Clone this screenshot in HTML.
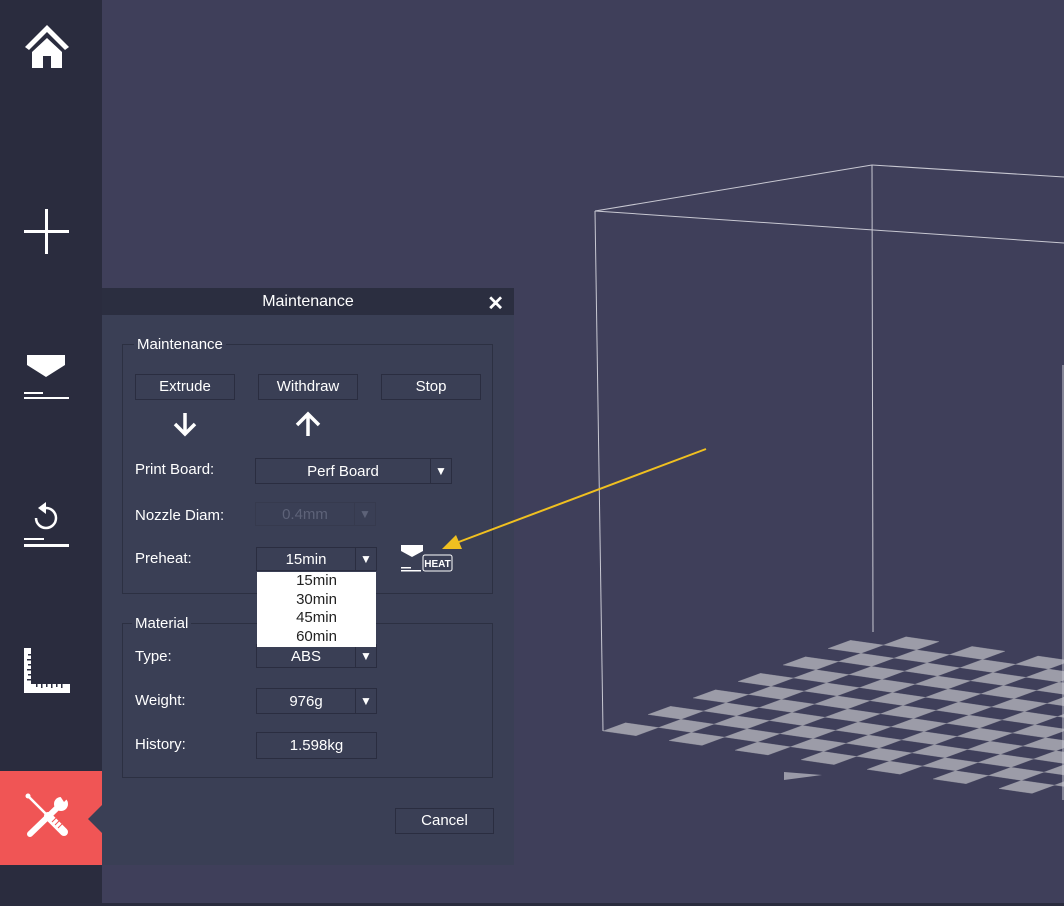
<!DOCTYPE html>
<html><head><meta charset="utf-8"><style>
*{margin:0;padding:0;box-sizing:border-box}
body{width:1064px;height:906px;background:#3f3f5a;position:relative;overflow:hidden;font-family:"Liberation Sans",Arial,sans-serif;color:#fff}
.side{position:absolute;left:0;top:0;width:102px;height:906px;background:#2a2c3e}
.red{position:absolute;left:0;top:771px;width:102px;height:94px;background:#f05555}
.notch{position:absolute;left:88px;top:805px;width:0;height:0;border-top:14px solid transparent;border-bottom:14px solid transparent;border-right:14px solid #3a3f55}
.dlg{position:absolute;left:102px;top:288px;width:412px;height:577px;background:#3a3f55}
.tb{height:27px;background:#2b2e40;text-align:center;font-size:16px;line-height:27px}
.x{position:absolute;right:10px;top:3px;font-size:20px;font-weight:bold}
.fs{position:absolute;border:1px solid #2c3042}
.leg{position:absolute;background:#3a3f55;font-size:15px;padding:0 3px}
.lab{position:absolute;font-size:15px}
.btn{position:absolute;border:1px solid #2a2d40;font-size:15px;text-align:center;height:26px;line-height:24px}
.sel{position:absolute;border:1px solid #2a2d40;font-size:15px;height:24px;line-height:23px}
.sel .v{position:absolute;left:0;top:0;bottom:0;text-align:center}
.sel .a{position:absolute;right:0;top:0;bottom:0;width:21px;border-left:1px solid #2a2d40;text-align:center;font-size:12px}
.dd{position:absolute;left:257px;top:572px;width:119px;height:75px;background:#fff;color:#222;font-size:15px;text-align:center;line-height:18.5px;padding-top:0}
.bottom{position:absolute;left:0;top:903px;width:1064px;height:3px;background:#2a2c3e}
</style></head><body>
<svg width="1064" height="906" style="position:absolute;left:0;top:0">
<g id="board"></g>
<g stroke="#c8c8d2" stroke-width="1" fill="none">
<line x1="595" y1="211" x2="872" y2="165"/><line x1="872" y1="165" x2="1064" y2="177"/>
<line x1="595" y1="211" x2="1064" y2="243"/><line x1="595" y1="211" x2="603" y2="731"/>
<line x1="872" y1="165" x2="873" y2="632"/><line x1="1063" y1="365" x2="1063" y2="800"/>
</g>
<polygon points="784,772 784,780 822,775" fill="#9a9aa8"/>
</svg>
<script>
var g=document.getElementById('board'),s='';
var N=12,A=[603,731],U=[(873-603)/N,(632-731)/N],V=[33,4.8];
function p(a,b){return (A[0]+a*U[0]+b*V[0]).toFixed(1)+','+(A[1]+a*U[1]+b*V[1]).toFixed(1)}
for(var i=0;i<N;i++)for(var j=0;j<16;j++){ if((i+j)%2==0)
s+='<polygon points="'+p(i,j)+' '+p(i+1,j)+' '+p(i+1,j+1)+' '+p(i,j+1)+'" fill="#9c9ca8" stroke="#9c9ca8" stroke-width="0.3"/>';}
g.innerHTML=s;
</script>
<div class="side"></div>
<svg width="102" height="906" style="position:absolute;left:0;top:0">
<g fill="#fff">
<path d="M25 47 L47 25 L69 47 L65 50 L47 32 L29 50Z"/><path d="M32 52 L47 38 L62 52 L62 68 L51 68 L51 56 L43 56 L43 68 L32 68Z"/>
<rect x="24" y="230" width="45" height="3"/><rect x="45" y="209" width="3" height="45"/>
<path d="M27 355 L65 355 L65 365 L46 377 L27 365Z"/><rect x="24" y="392" width="19" height="2"/><rect x="24" y="397" width="45" height="2"/>
<rect x="24" y="538" width="20" height="2"/><rect x="24" y="544" width="45" height="3"/>
<path d="M24 648 L31 648 L31 684 L70 684 L70 693 L24 693Z"/>
</g>
<g fill="#2a2c3e"><rect x="28" y="654" width="3" height="1.5"/><rect x="27" y="659" width="4" height="1.5"/><rect x="28" y="664" width="3" height="1.5"/><rect x="27" y="669" width="4" height="1.5"/><rect x="28" y="674" width="3" height="1.5"/><rect x="27" y="679" width="4" height="1.5"/>
<rect x="36" y="684" width="1.5" height="3"/><rect x="41" y="684" width="1.5" height="4"/><rect x="46" y="684" width="1.5" height="3"/><rect x="51" y="684" width="1.5" height="4"/><rect x="56" y="684" width="1.5" height="3"/><rect x="61" y="684" width="1.5" height="4"/></g>
<path d="M46 508 A10 10 0 1 1 36 518" stroke="#fff" stroke-width="2.5" fill="none"/><polygon points="38,508 46,502 46,514" fill="#fff"/>
</svg>
<div class="red"></div><div class="notch"></div>
<svg width="102" height="906" style="position:absolute;left:0;top:0">
<g stroke="#fff" stroke-linecap="round" fill="none">
<line x1="29" y1="797" x2="46" y2="814" stroke-width="2.5"/><line x1="48" y1="816" x2="64" y2="832" stroke-width="8"/>
<line x1="57" y1="808" x2="30" y2="834" stroke-width="6"/>
</g>
<circle cx="28" cy="796" r="2.5" fill="#fff"/>
<g stroke="#f05555" stroke-width="1"><line x1="52" y1="822" x2="58" y2="816"/><line x1="55" y1="825" x2="61" y2="819"/><line x1="58" y1="828" x2="63" y2="823"/></g>
<circle cx="61" cy="804" r="7" fill="#fff"/><polygon points="60,796 66,790 70,796 64,802" fill="#f05555"/>
</svg>
<div class="dlg">
<div class="tb">Maintenance<span class="x">✕</span></div>
<div class="fs" style="left:20px;top:56px;width:371px;height:250px"></div>
<div class="leg" style="left:32px;top:48px">Maintenance</div>
<div class="btn" style="left:33px;top:86px;width:100px">Extrude</div>
<div class="btn" style="left:156px;top:86px;width:100px">Withdraw</div>
<div class="btn" style="left:279px;top:86px;width:100px">Stop</div>
<svg width="412" height="60" style="position:absolute;left:0;top:120px"><g stroke="#fff" stroke-width="3.5" fill="none"><path d="M83 5 V26 M73 16 L83 26 L93 16"/><path d="M206 28 V6 M195 17 L206 6 L217 17"/></g></svg>
<div class="lab" style="left:33px;top:173px">Print Board:</div>
<div class="sel" style="left:153px;top:170px;width:197px;height:26px"><span class="v" style="right:21px;line-height:25px">Perf Board</span><span class="a" style="line-height:25px">▼</span></div>
<div class="lab" style="left:33px;top:219px">Nozzle Diam:</div>
<div class="sel" style="left:153px;top:214px;width:121px;color:#5d6278;border-color:#363a4e"><span class="v" style="right:21px">0.4mm</span><span class="a" style="border-color:#363a4e">▼</span></div>
<div class="lab" style="left:33px;top:262px">Preheat:</div>
<div class="sel" style="left:154px;top:259px;width:121px"><span class="v" style="right:21px">15min</span><span class="a">▼</span></div>
<svg width="60" height="30" style="position:absolute;left:297px;top:254px"><g fill="#fff"><path d="M2 3 H24 V9 L13 15 L2 9Z"/><rect x="2" y="25" width="10" height="1.5"/><rect x="2" y="28" width="20" height="1.5"/></g><rect x="24" y="13" width="29" height="16" rx="2" fill="#3a3f55" stroke="#fff"/><text x="38.5" y="25" font-size="10" font-weight="bold" fill="#fff" text-anchor="middle" font-family="Liberation Sans">HEAT</text></svg>
<div class="fs" style="left:20px;top:335px;width:371px;height:155px"></div>
<div class="leg" style="left:30px;top:327px">Material</div>
<div class="lab" style="left:33px;top:360px">Type:</div>
<div class="sel" style="left:154px;top:356px;width:121px"><span class="v" style="right:21px">ABS</span><span class="a">▼</span></div>
<div class="lab" style="left:33px;top:404px">Weight:</div>
<div class="sel" style="left:154px;top:400px;width:121px;height:26px"><span class="v" style="right:21px;line-height:25px">976g</span><span class="a" style="line-height:25px">▼</span></div>
<div class="lab" style="left:33px;top:448px">History:</div>
<div class="sel" style="left:154px;top:444px;width:121px;height:27px"><span class="v" style="right:0;line-height:26px">1.598kg</span></div>
<div class="btn" style="left:293px;top:520px;width:99px">Cancel</div>
</div>
<div class="dd">15min<br>30min<br>45min<br>60min</div>
<svg width="1064" height="906" style="position:absolute;left:0;top:0">
<line x1="706" y1="449" x2="456" y2="543" stroke="#f0c020" stroke-width="2"/>
<polygon points="442,549 456,535 462,549" fill="#f0c020"/>
</svg>
<div class="bottom"></div>
</body></html>
